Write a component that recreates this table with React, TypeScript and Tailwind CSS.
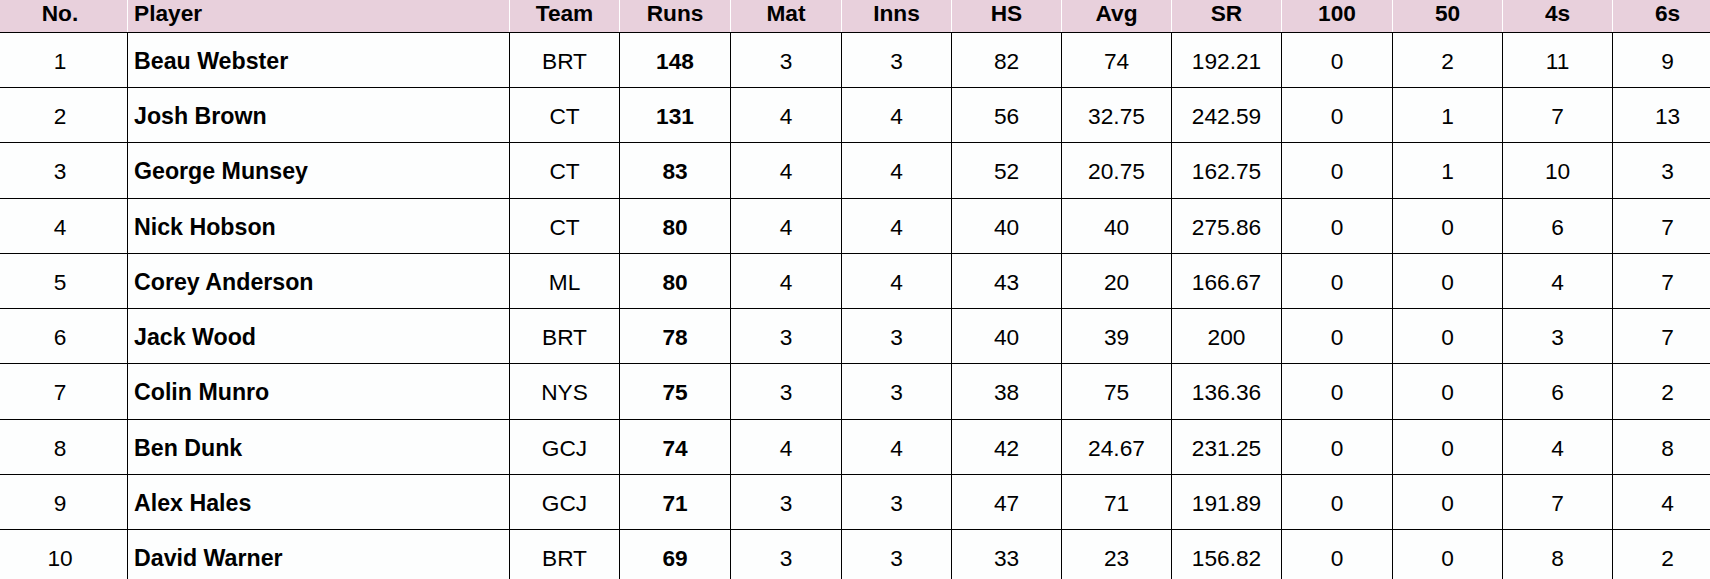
import React from "react";

const headers = ["No.", "Player", "Team", "Runs", "Mat", "Inns", "HS", "Avg", "SR", "100", "50", "4s", "6s"];

const rows: string[][] = [
  ["1", "Beau Webster", "BRT", "148", "3", "3", "82", "74", "192.21", "0", "2", "11", "9"],
  ["2", "Josh Brown", "CT", "131", "4", "4", "56", "32.75", "242.59", "0", "1", "7", "13"],
  ["3", "George Munsey", "CT", "83", "4", "4", "52", "20.75", "162.75", "0", "1", "10", "3"],
  ["4", "Nick Hobson", "CT", "80", "4", "4", "40", "40", "275.86", "0", "0", "6", "7"],
  ["5", "Corey Anderson", "ML", "80", "4", "4", "43", "20", "166.67", "0", "0", "4", "7"],
  ["6", "Jack Wood", "BRT", "78", "3", "3", "40", "39", "200", "0", "0", "3", "7"],
  ["7", "Colin Munro", "NYS", "75", "3", "3", "38", "75", "136.36", "0", "0", "6", "2"],
  ["8", "Ben Dunk", "GCJ", "74", "4", "4", "42", "24.67", "231.25", "0", "0", "4", "8"],
  ["9", "Alex Hales", "GCJ", "71", "3", "3", "47", "71", "191.89", "0", "0", "7", "4"],
  ["10", "David Warner", "BRT", "69", "3", "3", "33", "23", "156.82", "0", "0", "8", "2"],
];

const widths = [
  "w-[127px]",
  "w-[382px]",
  "w-[110px]",
  "w-[111px]",
  "w-[111px]",
  "w-[110px]",
  "w-[110px]",
  "w-[110px]",
  "w-[110px]",
  "w-[111px]",
  "w-[110px]",
  "w-[110px]",
  "w-[110px]",
];

const rowHeights = [
  "h-[55px]",
  "h-[55px]",
  "h-[56px]",
  "h-[55px]",
  "h-[55px]",
  "h-[55px]",
  "h-[56px]",
  "h-[55px]",
  "h-[55px]",
  "h-[56px]",
];

export default function App() {
  return (
    <div
      className="w-[1710px] h-[579px] overflow-hidden bg-white text-black text-[22.7px]"
      style={{ fontFamily: '"Liberation Sans", Arial, sans-serif' }}
    >
      <div className="w-[1722px]">
        {/* header */}
        <div className="flex h-[33px] bg-[#e8d0dc] border-b border-black">
          {headers.map((h, i) => (
            <div
              key={h}
              className={`${widths[i]} shrink-0 h-full pt-[2px] leading-[22px] font-bold ${
                i === 0 ? "text-center pr-[7px]" : "border-l border-white"
              } ${i === 1 ? "text-left pl-[6px]" : i > 1 ? "text-center" : ""}`}
            >
              {h}
            </div>
          ))}
        </div>
        {rows.map((r, ri) => (
          <div key={ri} className={`flex ${rowHeights[ri]} border-b border-black bg-[#fdfefe]`}>
            {r.map((c, i) => (
              <div
                key={i}
                className={`${widths[i]} shrink-0 h-full flex items-center pt-[2px] ${
                  i === 0 ? "justify-center pr-[7px]" : "border-l border-black"
                } ${i === 1 ? "justify-start pl-[6px] font-bold text-[23.2px]" : i > 1 ? "justify-center" : ""} ${
                  i === 3 ? "font-bold" : ""
                }`}
              >
                {c}
              </div>
            ))}
          </div>
        ))}
      </div>
    </div>
  );
}
